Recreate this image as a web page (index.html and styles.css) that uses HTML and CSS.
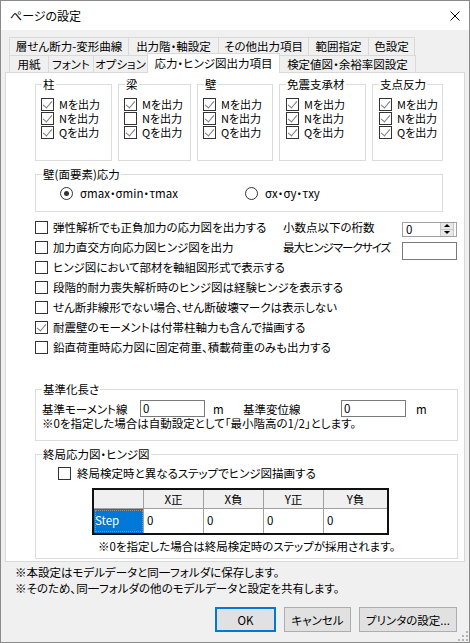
FILE: index.html
```html
<!DOCTYPE html>
<html lang="ja">
<head>
  <meta charset="UTF-8" />
  <title>ページの設定</title>
  <link rel="stylesheet" href="styles.css">
</head>
<body>
<div class="window">

  <!-- タイトルバー -->
  <div class="titlebar">
    <span class="title">ページの設定</span>
    <svg class="close" width="10" height="10" viewBox="0 0 10 10"><path d="M0.5 0.5L9.5 9.5M9.5 0.5L0.5 9.5" stroke="#000" stroke-width="1"/></svg>
  </div>

  <!-- タブ -->
  <div class="tabs">
    <div class="tabrow row1">
      <div class="tab">層せん断力-変形曲線</div>
      <div class="tab">出力階・軸設定</div>
      <div class="tab">その他出力項目</div>
      <div class="tab">範囲指定</div>
      <div class="tab">色設定</div>
    </div>
    <div class="tabrow row2">
      <div class="tab">用紙</div>
      <div class="tab">フォント</div>
      <div class="tab">オプション</div>
      <div class="tab active">応力・ヒンジ図出力項目</div>
      <div class="tab">検定値図・余裕率図設定</div>
    </div>
  </div>

  <div class="panel">

    <!-- 部材ごとの出力 -->
    <div class="members">
      <div class="group member m-col">
        <span class="group-title">柱</span>
        <div class="check"><span class="cb on"></span>Mを出力</div>
        <div class="check"><span class="cb on"></span>Nを出力</div>
        <div class="check"><span class="cb on"></span>Qを出力</div>
      </div>
      <div class="group member m-beam">
        <span class="group-title">梁</span>
        <div class="check"><span class="cb on"></span>Mを出力</div>
        <div class="check"><span class="cb"></span>Nを出力</div>
        <div class="check"><span class="cb on"></span>Qを出力</div>
      </div>
      <div class="group member m-wall">
        <span class="group-title">壁</span>
        <div class="check"><span class="cb on"></span>Mを出力</div>
        <div class="check"><span class="cb on"></span>Nを出力</div>
        <div class="check"><span class="cb on"></span>Qを出力</div>
      </div>
      <div class="group member m-iso">
        <span class="group-title">免震支承材</span>
        <div class="check"><span class="cb on"></span>Mを出力</div>
        <div class="check"><span class="cb on"></span>Nを出力</div>
        <div class="check"><span class="cb on"></span>Qを出力</div>
      </div>
      <div class="group member m-sup">
        <span class="group-title">支点反力</span>
        <div class="check"><span class="cb on"></span>Mを出力</div>
        <div class="check"><span class="cb on"></span>Nを出力</div>
        <div class="check"><span class="cb on"></span>Qを出力</div>
      </div>
    </div>

    <!-- 壁応力 -->
    <div class="group stress">
      <span class="group-title">壁(面要素)応力</span>
      <div class="radio first"><span class="rb on"></span>σmax・σmin・τmax</div>
      <div class="radio"><span class="rb"></span>σx・σy・τxy</div>
    </div>

    <!-- オプション -->
    <div class="options">
      <div class="opt">
        <div class="check wide"><span class="cb"></span>弾性解析でも正負加力の応力図を出力する</div>
        <span class="side-label">小数点以下の桁数</span>
        <div class="spin">
          <span class="spin-value">0</span>
          <div class="spin-btns"><span class="up"></span><span class="down"></span></div>
        </div>
      </div>
      <div class="opt">
        <div class="check wide"><span class="cb"></span>加力直交方向応力図ヒンジ図を出力</div>
        <span class="side-label tight">最大ヒンジマークサイズ</span>
        <div class="field size-field"></div>
      </div>
      <div class="opt"><div class="check"><span class="cb"></span>ヒンジ図において部材を軸組図形式で表示する</div></div>
      <div class="opt"><div class="check"><span class="cb"></span>段階的耐力喪失解析時のヒンジ図は経験ヒンジを表示する</div></div>
      <div class="opt"><div class="check"><span class="cb"></span>せん断非線形でない場合、せん断破壊マークは表示しない</div></div>
      <div class="opt"><div class="check"><span class="cb on"></span>耐震壁のモーメントは付帯柱軸力も含んで描画する</div></div>
      <div class="opt"><div class="check"><span class="cb"></span>鉛直荷重時応力図に固定荷重、積載荷重のみも出力する</div></div>
    </div>

    <!-- 基準化長さ -->
    <div class="group length">
      <span class="group-title">基準化長さ</span>
      <div class="len-row">
        <span class="len-label">基準モーメント線</span>
        <div class="field len-field">0</div>
        <span class="unit">m</span>
        <span class="len-label">基準変位線</span>
        <div class="field len-field">0</div>
        <span class="unit last">m</span>
      </div>
      <div class="len-note">※0を指定した場合は自動設定として「最小階高の1/2」とします。</div>
    </div>

    <!-- 終局応力図・ヒンジ図 -->
    <div class="group final">
      <span class="group-title">終局応力図・ヒンジ図</span>
      <div class="check"><span class="cb"></span>終局検定時と異なるステップでヒンジ図描画する</div>
      <div class="step-table">
        <div class="th"></div>
        <div class="th">X正</div>
        <div class="th">X負</div>
        <div class="th">Y正</div>
        <div class="th">Y負</div>
        <div class="td step">Step</div>
        <div class="td">0</div>
        <div class="td">0</div>
        <div class="td">0</div>
        <div class="td">0</div>
      </div>
      <div class="final-note">※0を指定した場合は終局検定時のステップが採用されます。</div>
    </div>
  </div>

  <div class="notes">
    <p>※本設定はモデルデータと同一フォルダに保存します。</p>
    <p>※そのため、同一フォルダの他のモデルデータと設定を共有します。</p>
  </div>

  <div class="buttons">
    <button class="btn ok">OK</button>
    <button class="btn cancel">キャンセル</button>
    <button class="btn printer">プリンタの設定...</button>
  </div>

  <svg class="grip" width="10" height="10" viewBox="0 0 10 10">
    <rect x="8" y="0" width="2" height="2" fill="#b4b4b4"/>
    <rect x="4" y="4" width="2" height="2" fill="#b4b4b4"/>
    <rect x="8" y="4" width="2" height="2" fill="#b4b4b4"/>
    <rect x="0" y="8" width="2" height="2" fill="#b4b4b4"/>
    <rect x="4" y="8" width="2" height="2" fill="#b4b4b4"/>
    <rect x="8" y="8" width="2" height="2" fill="#b4b4b4"/>
  </svg>
</div>
</body>
</html>
```

FILE: styles.css
```css
body {
  margin: 0;
  font-family: "Noto Sans CJK JP", "Noto Sans", sans-serif;
  font-size: 11.5px;
  font-feature-settings: "palt";
  color: #000;
  line-height: 14px;
}
p { margin: 0; }

.window {
  position: relative;
  width: 470px;
  height: 643px;
  box-sizing: border-box;
  border: 1px solid #8a8a8a;
  background-color: #f0f0f0;
  overflow: hidden;
}

/* タイトルバー */
.titlebar {
  height: 29px;
  background-color: #fff;
  display: flex;
  align-items: center;
  justify-content: space-between;
  padding: 0 9px 0 9px;
}
.title { font-size: 12px; }
.close { margin-top: 1px; }

/* タブ */
.tabs { margin: 7px 0 0 8px; }
.tabrow { display: flex; align-items: flex-start; }
.row1 { height: 18px; }
.row2 { height: 17px; }
.tab {
  box-sizing: border-box;
  border: 1px solid #d9d9d9;
  border-right: none;
  border-bottom: none;
  text-align: center;
  white-space: nowrap;
  background-color: #f0f0f0;
}
.tab:last-child { border-right: 1px solid #d9d9d9; }
.row1 .tab { height: 18px; line-height: 17px; }
.row2 .tab { height: 17px; line-height: 16px; }
.row1 .tab:nth-child(1) { width: 119px; }
.row1 .tab:nth-child(2) { width: 90px; }
.row1 .tab:nth-child(3) { width: 90px; }
.row1 .tab:nth-child(4) { width: 60px; }
.row1 .tab:nth-child(5) { width: 47px; }
.row2 .tab:nth-child(1) { width: 39px; }
.row2 .tab:nth-child(2) { width: 45px; }
.row2 .tab:nth-child(3) { width: 54px; }
.row2 .tab:nth-child(4) { width: 133px; }
.row2 .tab:nth-child(5) { width: 136px; }
.row2 .tab.active {
  position: relative;
  z-index: 1;
  margin-top: -2px;
  height: 20px;
  line-height: 19px;
  background-color: #fff;
  border-right: 1px solid #d9d9d9;
}
.row2 .tab.active + .tab { border-left: none; }

/* パネル */
.panel {
  margin-left: 4px;
  width: 460px;
  height: 490px;
  box-sizing: border-box;
  border: 1px solid #d9d9d9;
  background-color: #fff;
  padding: 11px 0 0 29px;
}

.group {
  position: relative;
  box-sizing: border-box;
  border: 1px solid #dcdcdc;
}
.group-title {
  position: absolute;
  top: -8px;
  left: 6px;
  padding: 0 1px;
  background-color: #fff;
  line-height: 14px;
  white-space: nowrap;
}

/* チェックボックス・ラジオ */
.check {
  display: flex;
  align-items: center;
  gap: 5px;
  height: 14px;
  line-height: 13px;
  white-space: nowrap;
}
.cb {
  position: relative;
  flex: none;
  width: 13px;
  height: 13px;
  box-sizing: border-box;
  border: 1px solid #333;
  background-color: #fff;
}
.cb.on::after {
  content: "";
  position: absolute;
  left: 3px;
  top: 0px;
  width: 4px;
  height: 8px;
  border: solid #7a7a7a;
  border-width: 0 1.5px 1.5px 0;
  transform: rotate(40deg);
}
.radio {
  display: flex;
  align-items: center;
  gap: 7px;
  height: 14px;
  white-space: nowrap;
}
.radio.first { width: 185px; }
.rb {
  flex: none;
  width: 13px;
  height: 13px;
  box-sizing: border-box;
  border: 1px solid #333;
  border-radius: 50%;
  background-color: #fff;
  display: flex;
  align-items: center;
  justify-content: center;
}
.rb.on::after {
  content: "";
  width: 5px;
  height: 5px;
  border-radius: 50%;
  background-color: #333;
}

/* 部材 */
.members { display: flex; gap: 6px; }
.member { height: 77px; padding: 12px 0 0 5px; }
.member .check { font-size: 11px; line-height: 12px; }
.m-col { width: 77px; }
.m-beam { width: 73px; }
.m-wall { width: 76px; }
.m-iso { width: 87px; padding-left: 6px; }
.m-sup { width: 71px; padding-left: 6px; }

.stress {
  width: 408px;
  height: 38px;
  margin-top: 13px;
  padding: 11px 0 0 24px;
  display: flex;
}

/* オプション */
.options { margin-top: 5px; }
.opt { display: flex; align-items: center; height: 20px; }
.check.wide { width: 248px; }
.side-label { width: 119px; white-space: nowrap; }
.side-label.tight { letter-spacing: -1px; }
.spin {
  display: flex;
  justify-content: space-between;
  width: 55px;
  height: 15px;
  box-sizing: border-box;
  border: 1px solid #a0a0a0;
  margin: 2px 0 -2px 0;
}
.spin-value { padding-left: 3px; line-height: 13px; }
.spin-btns {
  display: flex;
  flex-direction: column;
  width: 12px;
  margin: 0 2px 0 0;
  border-left: 1px solid #c8c8c8;
  border-right: 1px solid #c8c8c8;
  background-color: #e8e8e8;
}
.spin-btns span {
  flex: 1;
  display: flex;
  align-items: center;
  justify-content: center;
}
.spin-btns .up { border-bottom: 1px solid #c8c8c8; }
.spin-btns .up::after {
  content: "";
  border: 3px solid transparent;
  border-top: none;
  border-bottom: 3px solid #000;
}
.spin-btns .down::after {
  content: "";
  border: 3px solid transparent;
  border-bottom: none;
  border-top: 3px solid #000;
}
.field {
  box-sizing: border-box;
  border: 1px solid #7a7a7a;
  background-color: #fff;
}
.size-field { width: 55px; height: 18px; margin: 4px 0 -4px 0; }

/* 基準化長さ */
.length {
  width: 423px;
  height: 52px;
  margin-top: 32px;
  padding: 10px 0 0 6px;
}
.len-row { display: flex; align-items: center; height: 17px; }
.len-label { width: 98px; white-space: nowrap; }
.len-field { width: 65px; height: 17px; padding-left: 2px; line-height: 15px; }
.unit { margin-left: 8px; width: 30px; }
.unit.last { margin-left: 10px; }
.len-note { margin-top: 0; line-height: 13px; white-space: nowrap; }

/* 終局 */
.final {
  width: 423px;
  height: 105px;
  margin-top: 13px;
  padding: 11px 0 0 22px;
}
.final .check { gap: 6px; }
.step-table {
  display: grid;
  grid-template-columns: 50px 60px 60px 60px 1fr;
  grid-template-rows: 19px 24px;
  width: 297px;
  box-sizing: border-box;
  border: 2px solid #111;
  margin: 8px 0 0 34px;
}
.th, .td {
  box-sizing: border-box;
  border-right: 1px solid #a0a0a0;
  border-bottom: 1px solid #a0a0a0;
  white-space: nowrap;
}
.th {
  background-color: #f0f0f0;
  text-align: center;
  line-height: 18px;
}
.td { padding-left: 3px; line-height: 23px; border-bottom: none; }
.th:nth-child(5), .td:last-child { border-right: none; }
.td.step {
  background-color: #0078d7;
  color: #fff;
  padding-left: 1px;
  outline: 1px dotted #d9822b;
  outline-offset: -2px;
}
.final-note { margin: 4px 0 0 40px; white-space: nowrap; }

/* 下部 */
.notes { padding-left: 14px; margin-top: 2px; }
.notes p { line-height: 16px; }
.buttons {
  display: flex;
  justify-content: flex-end;
  gap: 8px;
  padding-right: 12px;
  margin-top: 11px;
}
.btn {
  height: 25px;
  box-sizing: border-box;
  border: 1px solid #adadad;
  background-color: #e1e1e1;
  font-family: inherit;
  font-size: 11.5px;
  font-feature-settings: "palt";
  padding: 0;
  color: #000;
}
.btn.ok { width: 61px; border: 2px solid #0078d7; }
.btn.cancel { width: 67px; }
.btn.printer { width: 98px; }
.grip { position: absolute; right: 1px; bottom: 1px; }
```
